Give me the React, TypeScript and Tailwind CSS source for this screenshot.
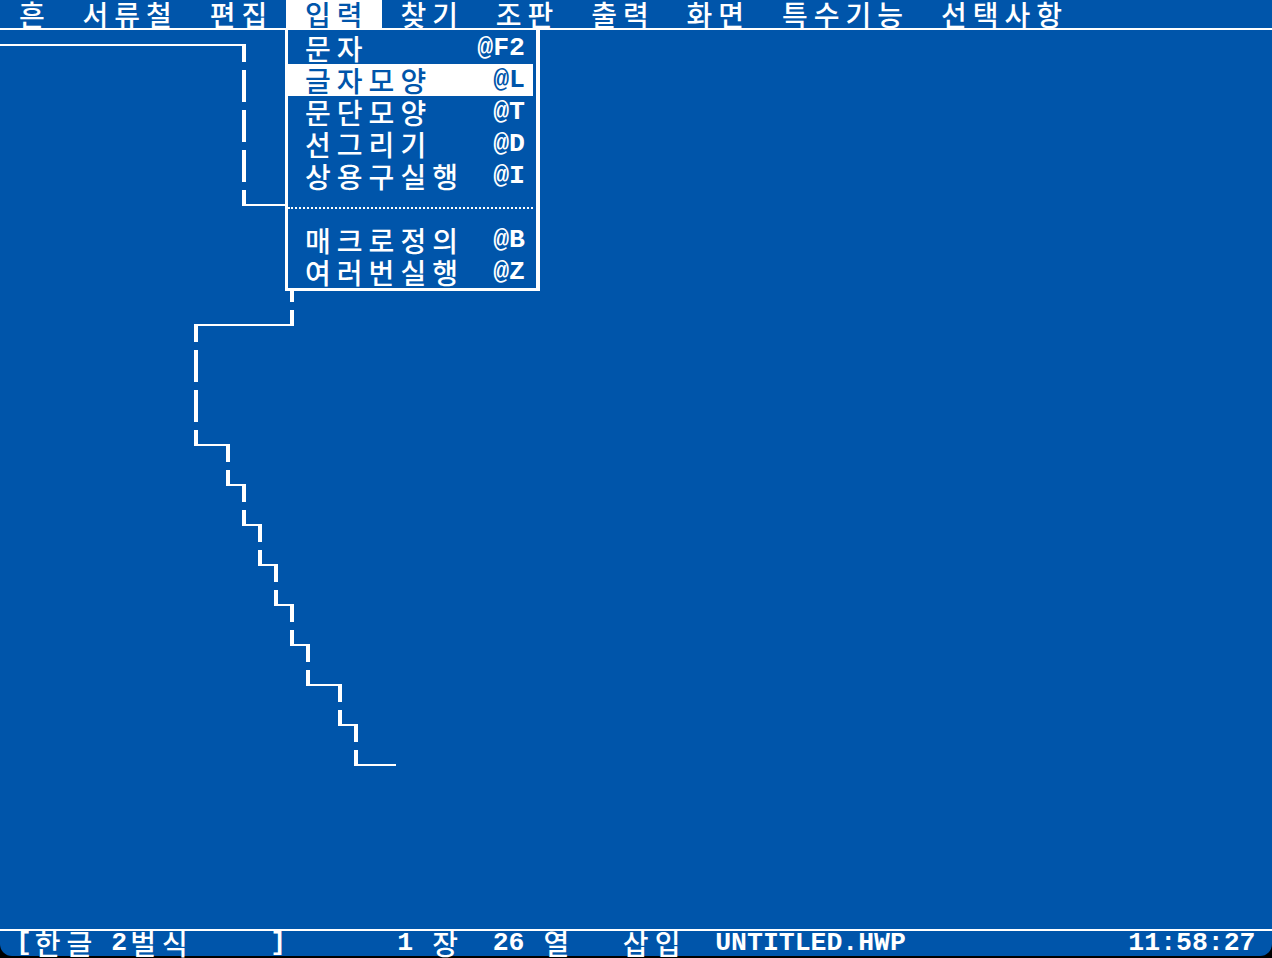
import React from "react";

const WIDE = /[\u1100-\u11ff\u3130-\u318f\uac00-\ud7a3]/;

function Cells({ text }: { text: string }) {
  return (
    <>
      {Array.from(text).map((ch, i) =>
        WIDE.test(ch) ? (
          <span
            key={i}
            className="inline-block w-[31.8px] shrink-0 text-center font-['Noto_Sans_CJK_KR',sans-serif] text-[28px] font-medium"
          >
            {ch}
          </span>
        ) : (
          <span
            key={i}
            className="inline-block w-[15.9px] shrink-0 text-center font-['Liberation_Mono',monospace] text-[26.5px] font-bold"
          >
            {ch === " " ? "\u00a0" : ch}
          </span>
        )
      )}
    </>
  );
}

type Seg = [number, number, number];

const H: Seg[] = [
  [0, 246, 44],
  [242, 294, 204],
  [194, 294, 324],
  [194, 230, 444],
  [226, 246, 484],
  [242, 262, 524],
  [258, 278, 564],
  [274, 294, 604],
  [290, 310, 644],
  [306, 342, 684],
  [338, 358, 724],
  [354, 396, 764],
];

const V: Seg[] = [
  [242, 44, 206],
  [290, 204, 326],
  [194, 324, 446],
  [226, 444, 486],
  [242, 484, 526],
  [258, 524, 566],
  [274, 564, 606],
  [290, 604, 646],
  [306, 644, 686],
  [338, 684, 726],
  [354, 724, 766],
];

function vRects(x: number, y1: number, y2: number) {
  const out: { x: number; y: number; h: number }[] = [];
  let y = y1;
  while (y < y2) {
    const k = Math.floor((y - 22) / 40);
    const gapStart = 22 + 40 * k;
    const gapEnd = gapStart + 8;
    if (y >= gapStart && y < gapEnd) {
      y = gapEnd;
      continue;
    }
    const nextGap = y < gapStart ? gapStart : gapStart + 40;
    const end = Math.min(nextGap, y2);
    out.push({ x, y, h: end - y });
    y = end;
  }
  return out;
}

function Drawing() {
  return (
    <svg
      className="absolute left-0 top-0 pointer-events-none"
      width={1272}
      height={956}
      viewBox="0 0 1272 956"
    >
      {H.map(([x1, x2, y], i) => (
        <rect key={"h" + i} x={x1} y={y} width={x2 - x1} height={2} fill="#fff" />
      ))}
      {V.flatMap(([x, y1, y2], i) =>
        vRects(x, y1, y2).map((r, j) => (
          <rect key={"v" + i + "-" + j} x={r.x} y={r.y} width={4} height={r.h} fill="#fff" />
        ))
      )}
    </svg>
  );
}

const items: { label: string; key: string; active?: boolean }[] = [
  { label: "문자", key: "@F2" },
  { label: "글자모양", key: "@L", active: true },
  { label: "문단모양", key: "@T" },
  { label: "선그리기", key: "@D" },
  { label: "상용구실행", key: "@I" },
];

const items2: { label: string; key: string }[] = [
  { label: "매크로정의", key: "@B" },
  { label: "여러번실행", key: "@Z" },
];

function MenuRow({ label, k, active }: { label: string; k: string; active?: boolean }) {
  return (
    <div
      className={
        active
          ? "flex h-[32px] items-center justify-between bg-white pl-[14px] pr-[8px] leading-[32px] text-[#0055aa] whitespace-nowrap"
          : "flex h-[32px] items-center justify-between pl-[14px] pr-[8px] leading-[32px] text-white whitespace-nowrap"
      }
    >
      <div className="flex">
        <Cells text={label} />
      </div>
      <div className="flex">
        <Cells text={k} />
      </div>
    </div>
  );
}

export default function App() {
  return (
    <div className="w-[1272px] h-[958px] bg-black">
      <div className="relative flex h-[956px] flex-col rounded-b-[12px] bg-[#0055aa] text-white">
        {/* menu bar */}
        <div className="flex h-[28px] items-center leading-[28px] whitespace-nowrap">
          <Cells text=" 흔  서류철  편집 " />
          <div className="flex h-[28px] bg-white text-[#0055aa]">
            <Cells text=" 입력 " />
          </div>
          <Cells text=" 찾기  조판  출력  화면  특수기능  선택사항" />
        </div>
        <div className="h-[2px] bg-white" />

        {/* document area */}
        <div className="flex-1" />

        {/* status bar */}
        <div className="h-[2px] bg-white" />
        <div className="flex h-[25px] items-center leading-[25px] whitespace-nowrap">
          <Cells text=" [한글 2벌식     ]       1 장  26 열   삽입  UNTITLED.HWP              11:58:27" />
        </div>

        <Drawing />

        {/* dropdown menu */}
        <div className="absolute left-[285px] top-[30px] w-[255px] border-b-[3px] border-l-[3px] border-r-[4px] border-white bg-[#0055aa] pt-[2px] pr-[3px]">
          {items.map((it) => (
            <MenuRow key={it.label} label={it.label} k={it.key} active={it.active} />
          ))}
          <div className="flex h-[32px] items-center">
            <div className="w-full border-t-2 border-dotted border-white" />
          </div>
          {items2.map((it) => (
            <MenuRow key={it.label} label={it.label} k={it.key} />
          ))}
        </div>
      </div>
    </div>
  );
}
